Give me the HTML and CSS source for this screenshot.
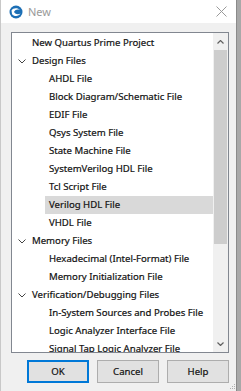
FILE: index.html
```html
<!DOCTYPE html>
<html lang="en">
<head>
    <meta charset="UTF-8">
    <title>New</title>
    <link rel="stylesheet" href="styles.css">
</head>
<body>
    <div class="window">
        <div class="titlebar">
            <svg class="app-icon" width="14" height="14" viewBox="0 0 14 14">
                <circle cx="7" cy="7" r="6.5" fill="#1c6fb5"/>
                <path d="M2.5 5.5 C4 2.5 9 2.5 11 5 C8.5 4 6 4.8 5 7 C6.5 9.5 9.5 9.8 11.5 8.5 C10 11.5 5 12 3 9 Z" fill="#ffffff"/>
            </svg>
            <span class="title">New</span>
            <svg class="close" width="11" height="11" viewBox="0 0 11 11">
                <path d="M0.5 0.5 L10.5 10.5 M10.5 0.5 L0.5 10.5" stroke="#9a9a9a" stroke-width="1" fill="none"/>
            </svg>
        </div>
        <div class="content">
            <div class="tree">
                <ul class="tree-list">
                    <li class="row lvl0 leaf">New Quartus Prime Project</li>
                    <li class="row lvl0 group"><svg class="chev" width="8" height="5" viewBox="0 0 8 5"><path d="M0.5 0.5 L4 4 L7.5 0.5" stroke="#444" fill="none"/></svg>Design Files</li>
                    <li class="row lvl1">AHDL File</li>
                    <li class="row lvl1">Block Diagram/Schematic File</li>
                    <li class="row lvl1">EDIF File</li>
                    <li class="row lvl1">Qsys System File</li>
                    <li class="row lvl1">State Machine File</li>
                    <li class="row lvl1">SystemVerilog HDL File</li>
                    <li class="row lvl1">Tcl Script File</li>
                    <li class="row lvl1 selected">Verilog HDL File</li>
                    <li class="row lvl1">VHDL File</li>
                    <li class="row lvl0 group"><svg class="chev" width="8" height="5" viewBox="0 0 8 5"><path d="M0.5 0.5 L4 4 L7.5 0.5" stroke="#444" fill="none"/></svg>Memory Files</li>
                    <li class="row lvl1">Hexadecimal (Intel-Format) File</li>
                    <li class="row lvl1">Memory Initialization File</li>
                    <li class="row lvl0 group"><svg class="chev" width="8" height="5" viewBox="0 0 8 5"><path d="M0.5 0.5 L4 4 L7.5 0.5" stroke="#444" fill="none"/></svg>Verification/Debugging Files</li>
                    <li class="row lvl1">In-System Sources and Probes File</li>
                    <li class="row lvl1">Logic Analyzer Interface File</li>
                    <li class="row lvl1">Signal Tap Logic Analyzer File</li>
                </ul>
                <div class="scrollbar">
                    <div class="arrow"><svg width="7" height="4" viewBox="0 0 7 4"><path d="M0.5 3.5 L3.5 0.5 L6.5 3.5" stroke="#606060" stroke-width="1.2" fill="none"/></svg></div>
                    <div class="track"><div class="thumb"></div></div>
                    <div class="arrow"><svg width="7" height="4" viewBox="0 0 7 4"><path d="M0.5 0.5 L3.5 3.5 L6.5 0.5" stroke="#606060" stroke-width="1.2" fill="none"/></svg></div>
                </div>
            </div>
            <div class="buttons">
                <button class="btn default">OK</button>
                <button class="btn">Cancel</button>
                <button class="btn">Help</button>
            </div>
            <div class="grip">
                <svg width="7" height="7" viewBox="0 0 7 7">
                    <rect x="5" y="1" width="1" height="1" fill="#b0b0b0"/>
                    <rect x="3" y="3" width="1" height="1" fill="#b0b0b0"/>
                    <rect x="5" y="3" width="1" height="1" fill="#b0b0b0"/>
                    <rect x="1" y="5" width="1" height="1" fill="#b0b0b0"/>
                    <rect x="3" y="5" width="1" height="1" fill="#b0b0b0"/>
                    <rect x="5" y="5" width="1" height="1" fill="#b0b0b0"/>
                </svg>
            </div>
        </div>
    </div>
    <div class="edge"></div>
</body>
</html>
```

FILE: styles.css
```css
* {
    margin: 0;
    padding: 0;
    box-sizing: border-box;
}

body {
    display: flex;
    width: 241px;
    height: 391px;
    overflow: hidden;
    font-family: "Noto Sans", "Open Sans", sans-serif;
    font-size: 9.6px;
    color: #111;
    background: #f0f0f0;
}

.window {
    width: 236px;
    height: 391px;
    display: flex;
    flex-direction: column;
    background: #f0f0f0;
    border-left: 1px solid #c8c8c8;
}

.titlebar {
    height: 23px;
    display: flex;
    align-items: center;
    background: #ffffff;
    padding: 0 6px 0 8px;
}

.app-icon {
    margin-right: 5px;
}

.title {
    flex: 1;
    color: #9a9a9a;
    font-size: 11px;
}

.close {
    margin-right: 3px;
}

.content {
    position: relative;
    flex: 1;
    padding: 9px 7px 0 10px;
}

.tree {
    height: 321px;
    display: flex;
    background: #ffffff;
    border: 1px solid #828790;
}

.tree-list {
    flex: 1;
    list-style: none;
    overflow: hidden;
    padding-top: 1px;
    -webkit-text-stroke: 0.2px #111;
}

.row {
    height: 18px;
    line-height: 18px;
    white-space: nowrap;
    display: flex;
    align-items: center;
}

.lvl0 {
    padding-left: 20px;
}

.lvl0.group {
    padding-left: 6px;
}

.chev {
    margin-right: 6px;
}

.lvl1 {
    padding-left: 37px;
}

.selected {
    background: #d9d9d9;
    margin-left: 33px;
    padding-left: 4px;
}

.scrollbar {
    width: 15px;
    display: flex;
    flex-direction: column;
    background: #f0f0f0;
}

.arrow {
    height: 17px;
    display: flex;
    align-items: center;
    justify-content: center;
}

.track {
    flex: 1;
}

.thumb {
    height: 194px;
    margin: 0 1px;
    background: #cdcdcd;
}

.buttons {
    display: flex;
    justify-content: flex-end;
    gap: 8px;
    margin-top: 7px;
}

.btn {
    width: 62px;
    height: 23px;
    font-family: "Noto Sans", "Open Sans", sans-serif;
    font-size: 9.6px;
    color: #111;
    background: #e1e1e1;
    border: 1px solid #adadad;
    -webkit-text-stroke: 0.2px #111;
}

.btn.default {
    border: 2px solid #0078d7;
}

.grip {
    position: absolute;
    right: 0;
    bottom: 1px;
    line-height: 0;
}

.edge {
    flex: 1;
    border-left: 1px solid #8a8a8a;
    background: #a8a8a8;
}
```
